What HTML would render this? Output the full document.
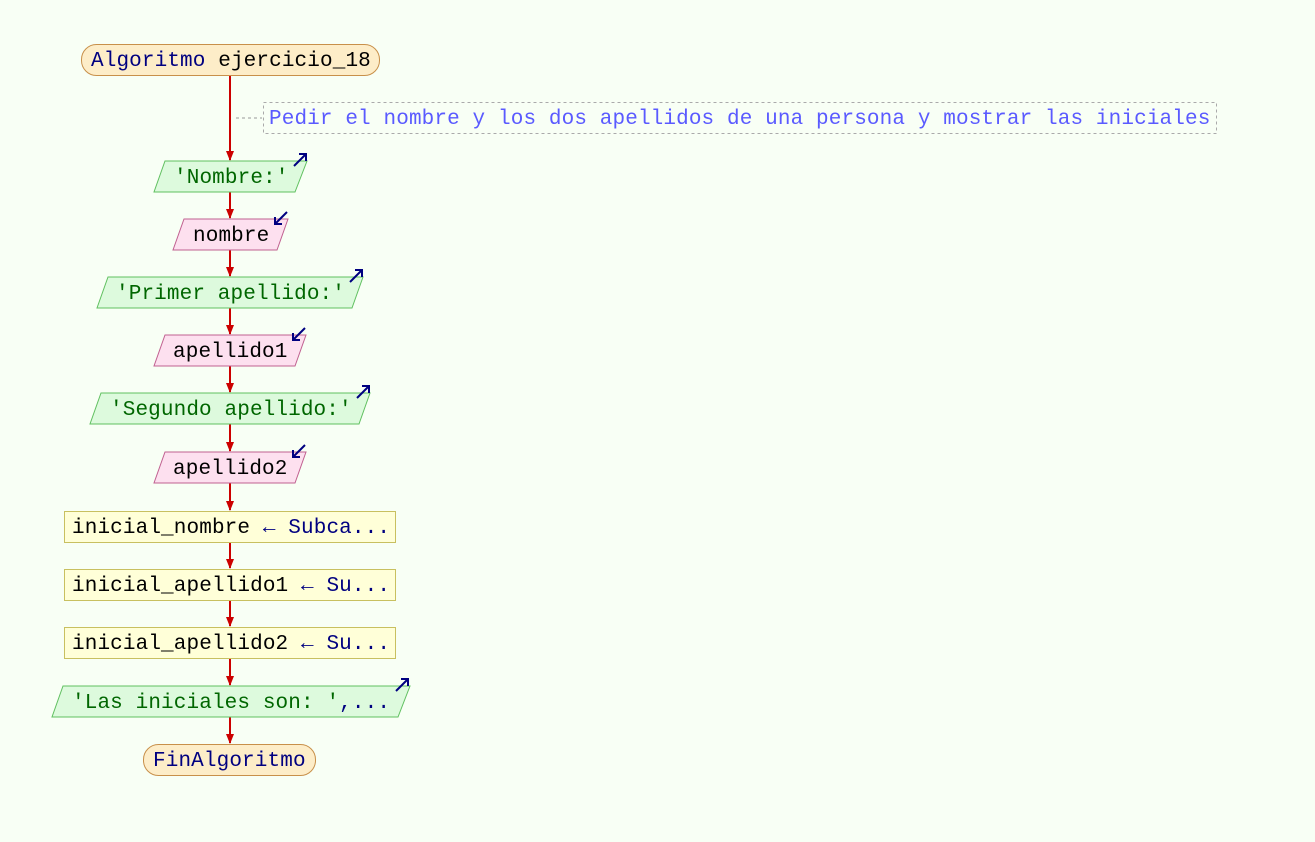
<!DOCTYPE html>
<html><head><meta charset="utf-8"><style>
html,body{margin:0;padding:0;background:#f8fff5;}
svg text{font-family:"Liberation Mono","DejaVu Sans Mono",monospace;font-size:21px;letter-spacing:0.12px;}
</style></head><body>
<svg width="1315" height="837" xmlns="http://www.w3.org/2000/svg">
<defs><marker id="a" markerWidth="10" markerHeight="8" refX="9" refY="4" orient="auto" markerUnits="userSpaceOnUse"><path d="M0,0 L10,4 L0,8 z" fill="#cc0000"/></marker></defs>
<rect width="1315" height="837" fill="#f8fff5"/>
<g stroke="#cc0000" stroke-width="2" marker-end="url(#a)">
<line x1="230" y1="76" x2="230" y2="160"/>
<line x1="230" y1="192" x2="230" y2="218"/>
<line x1="230" y1="250" x2="230" y2="276"/>
<line x1="230" y1="308" x2="230" y2="334"/>
<line x1="230" y1="366" x2="230" y2="392"/>
<line x1="230" y1="424" x2="230" y2="451"/>
<line x1="230" y1="483" x2="230" y2="510"/>
<line x1="230" y1="542" x2="230" y2="568"/>
<line x1="230" y1="600" x2="230" y2="626"/>
<line x1="230" y1="658" x2="230" y2="685"/>
<line x1="230" y1="717" x2="230" y2="743"/>
</g>
<line x1="236" y1="118" x2="262" y2="118" stroke="#999" stroke-dasharray="3,3"/>
<rect x="263.5" y="102.5" width="953" height="31" fill="none" stroke="#aaa" stroke-dasharray="3,3"/>
<text x="269" y="124" fill="#5a5aff">Pedir el nombre y los dos apellidos de una persona y mostrar las iniciales</text>

<rect x="81.5" y="44.5" width="298" height="31" rx="15" fill="#fdedc8" stroke="#c8904a"/>
<text x="91" y="66"><tspan fill="#000080">Algoritmo</tspan> ejercicio_18</text>

<g stroke-width="1">
<polygon points="165,161 307,161 295,192 154,192" fill="#ddfadd" stroke="#60c060"/>
<text x="174" y="183" fill="#006600">'Nombre:'</text>
<polygon points="184,219 288,219 277,250 173,250" fill="#fde0ef" stroke="#c06090"/>
<text x="193" y="241" fill="#000">nombre</text>
<polygon points="108,277 363,277 352,308 97,308" fill="#ddfadd" stroke="#60c060"/>
<text x="116" y="299" fill="#006600">'Primer apellido:'</text>
<polygon points="165,335 306,335 295,366 154,366" fill="#fde0ef" stroke="#c06090"/>
<text x="173" y="357" fill="#000">apellido1</text>
<polygon points="101,393 370,393 359,424 90,424" fill="#ddfadd" stroke="#60c060"/>
<text x="110" y="415" fill="#006600">'Segundo apellido:'</text>
<polygon points="165,452 306,452 295,483 154,483" fill="#fde0ef" stroke="#c06090"/>
<text x="173" y="474" fill="#000">apellido2</text>
<rect x="64.5" y="511.5" width="331" height="31" fill="#ffffd8" stroke="#c8c060"/>
<text x="72" y="533"><tspan fill="#000">inicial_nombre</tspan><tspan fill="#000080"> ← Subca...</tspan></text>
<rect x="64.5" y="569.5" width="331" height="31" fill="#ffffd8" stroke="#c8c060"/>
<text x="72" y="591"><tspan fill="#000">inicial_apellido1</tspan><tspan fill="#000080"> ← Su...</tspan></text>
<rect x="64.5" y="627.5" width="331" height="31" fill="#ffffd8" stroke="#c8c060"/>
<text x="72" y="649"><tspan fill="#000">inicial_apellido2</tspan><tspan fill="#000080"> ← Su...</tspan></text>
<polygon points="63,686 410,686 398,717 52,717" fill="#ddfadd" stroke="#60c060"/>
<text x="72" y="708"><tspan fill="#006600">'Las iniciales son: '</tspan><tspan fill="#000080">,...</tspan></text>
</g>
<rect x="143.5" y="744.5" width="172" height="31" rx="15" fill="#fdedc8" stroke="#c8904a"/>
<text x="153" y="766" fill="#000080">FinAlgoritmo</text>

<g stroke="#000080" stroke-width="2" fill="none">
<path d="M294,166 L306,154 M299,154 L306,154 L306,161"/>
<path d="M350,282 L362,270 M355,270 L362,270 L362,277"/>
<path d="M357,398 L369,386 M362,386 L369,386 L369,393"/>
<path d="M396,691 L408,679 M401,679 L408,679 L408,686"/>
<path d="M287,212 L275,224 M275,217 L275,224 L282,224"/>
<path d="M305,328 L293,340 M293,333 L293,340 L300,340"/>
<path d="M305,445 L293,457 M293,450 L293,457 L300,457"/>
</g>
</svg>
</body></html>
